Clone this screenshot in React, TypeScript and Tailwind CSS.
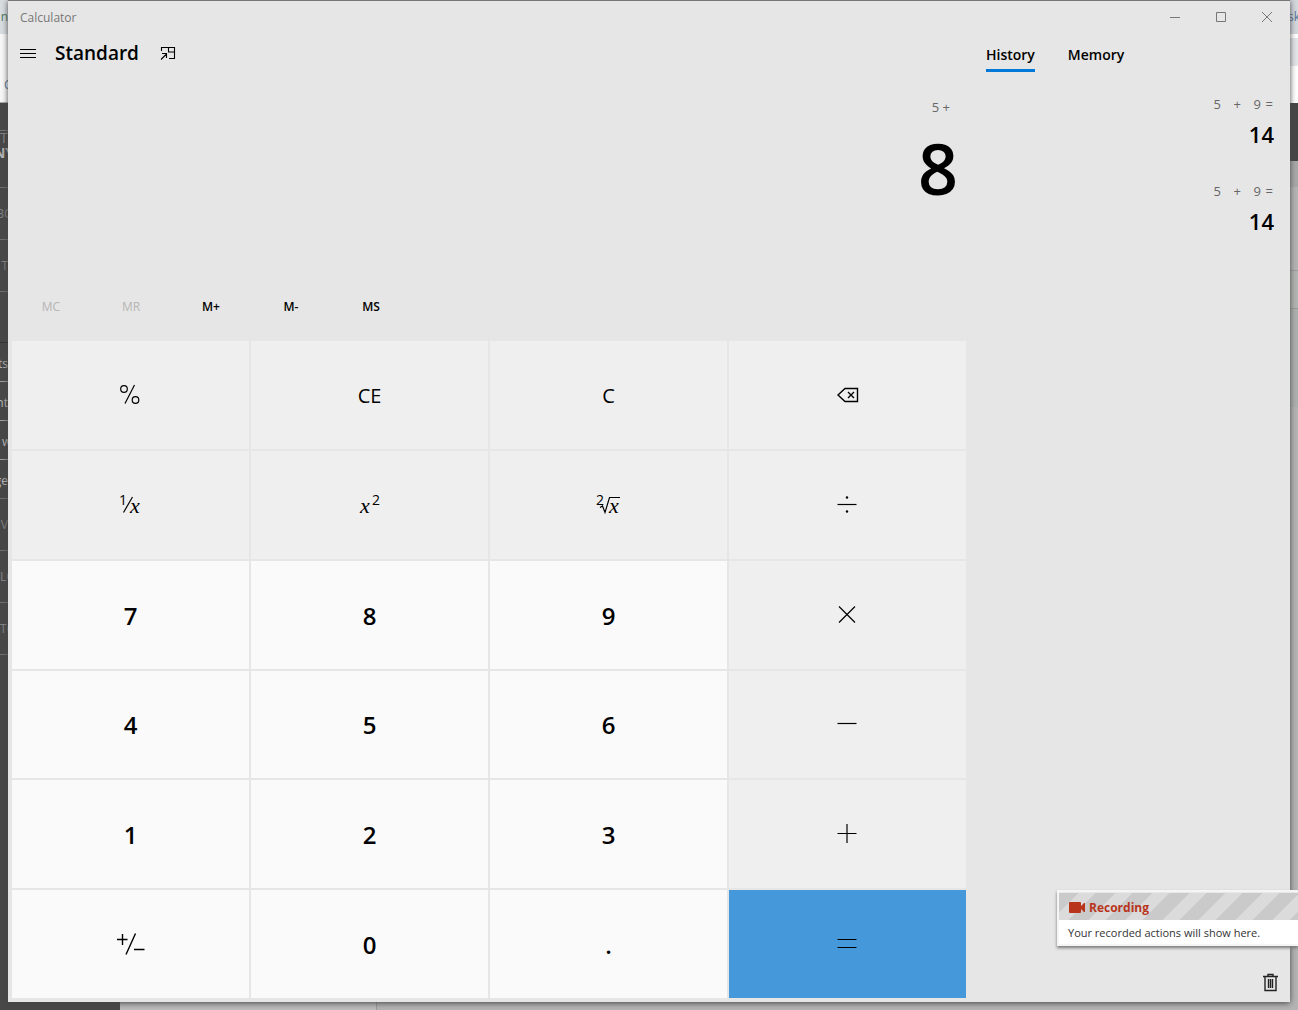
import React from "react";

type IconProps = { children: React.ReactNode };

function Icon({ children }: IconProps) {
  return (
    <svg className="size-8 shrink-0" viewBox="1 0 32 32" fill="none" stroke="black" strokeWidth="1.2" aria-hidden="true">
      {children}
    </svg>
  );
}

const Glyph = ({ x, y, children }: { x: number; y: number; children: string }) => (
  <text x={x} y={y} className="fill-black stroke-none font-['Open_Sans',sans-serif] text-[14px]">
    {children}
  </text>
);

const Variable = ({ x, y }: { x: number; y: number }) => (
  <text x={x} y={y} className="fill-black stroke-none font-['Liberation_Serif',serif] text-[22px] italic">
    x
  </text>
);

const icons: Record<string, React.ReactNode> = {
  percent: (
    <Icon>
      <circle cx="10" cy="10" r="3.3" />
      <circle cx="21.5" cy="21" r="3.3" />
      <path d="M20.5 6 11 24.5" />
    </Icon>
  ),
  reciprocal: (
    <Icon>
      <Glyph x={5} y={16}>1</Glyph>
      <path d="M18.5 8 9.5 23.5" />
      <Variable x={16} y={24} />
    </Icon>
  ),
  square: (
    <Icon>
      <Variable x={7} y={24} />
      <Glyph x={19} y={16}>2</Glyph>
    </Icon>
  ),
  root: (
    <Icon>
      <Glyph x={4} y={16}>2</Glyph>
      <path d="M8 18.5 10.5 17 13 23.5 17.5 8.5H28" />
      <Variable x={17} y={24} />
    </Icon>
  ),
  backspace: (
    <Icon>
      <path d="M7 16 14 9.5H26.5V22.5H14Z M17 13 23 19 M23 13 17 19" strokeWidth="1.4" />
    </Icon>
  ),
  divide: (
    <Icon>
      <path d="M6.5 15.5H25.5" />
      <circle cx="16" cy="8.5" r="1.2" className="fill-black stroke-none" />
      <circle cx="16" cy="22.5" r="1.2" className="fill-black stroke-none" />
    </Icon>
  ),
  multiply: (
    <Icon>
      <path d="M8 7.5 24 23.5 M24 7.5 8 23.5" />
    </Icon>
  ),
  minus: (
    <Icon>
      <path d="M6.5 15.5H25.5" />
    </Icon>
  ),
  plus: (
    <Icon>
      <path d="M6.5 15.5H25.5 M16 6V25" />
    </Icon>
  ),
  equals: (
    <Icon>
      <path d="M6.5 11.5H25.5 M6.5 19.5H25.5" />
    </Icon>
  ),
  negate: (
    <Icon>
      <path d="M3 11.5H13.5 M8.5 6V17 M21.5 5.5 12 26.5 M20 21.5H30.5" strokeWidth="1.4" />
    </Icon>
  ),
};

type Key = { label: string; icon?: string; kind: "op" | "fn" | "num" | "eq" };

const keys: Key[] = [
  { label: "Percent", icon: "percent", kind: "fn" },
  { label: "CE", kind: "fn" },
  { label: "C", kind: "fn" },
  { label: "Backspace", icon: "backspace", kind: "fn" },
  { label: "Reciprocal", icon: "reciprocal", kind: "fn" },
  { label: "Square", icon: "square", kind: "fn" },
  { label: "Square root", icon: "root", kind: "fn" },
  { label: "Divide by", icon: "divide", kind: "op" },
  { label: "7", kind: "num" },
  { label: "8", kind: "num" },
  { label: "9", kind: "num" },
  { label: "Multiply by", icon: "multiply", kind: "op" },
  { label: "4", kind: "num" },
  { label: "5", kind: "num" },
  { label: "6", kind: "num" },
  { label: "Minus", icon: "minus", kind: "op" },
  { label: "1", kind: "num" },
  { label: "2", kind: "num" },
  { label: "3", kind: "num" },
  { label: "Plus", icon: "plus", kind: "op" },
  { label: "Positive negative", icon: "negate", kind: "num" },
  { label: "0", kind: "num" },
  { label: ".", kind: "num" },
  { label: "Equals", icon: "equals", kind: "eq" },
];

const keyStyles = {
  fn: "bg-[#efefef] text-xl",
  op: "bg-[#efefef] text-xl",
  num: "bg-[#fafafa] text-2xl font-semibold",
  eq: "bg-[#4599db] text-xl",
};

const memoryKeys = [
  { label: "MC", disabled: true },
  { label: "MR", disabled: true },
  { label: "M+", disabled: false },
  { label: "M-", disabled: false },
  { label: "MS", disabled: false },
];

const leftSlices = [
  { text: "n", style: "h-[34px] bg-[#d8dde1] justify-end text-xs text-[#4b7b5c]" },
  { text: "", style: "h-[34px] bg-[#f8f8f8]" },
  { text: "C", style: "h-[35px] bg-[#f8f8f8] border-b border-[#aaa] text-xs text-[#54759b] pl-1" },
  { text: "", style: "h-[27px]" },
  { text: "TO", style: "h-[15px] border-t border-[#777] text-sm text-[#858585]" },
  { text: "NY", style: "h-[15px] justify-center text-sm font-bold text-[#b5b5b5]" },
  { text: "", style: "h-[27px]" },
  { text: "BC", style: "h-[52px] border-t border-[#707070] justify-center text-xs text-[#858585]" },
  { text: "T", style: "h-[52px] border-t border-[#707070] justify-end text-xs text-[#858585]" },
  { text: "", style: "h-[51px] border-t border-[#707070]" },
  { text: "ts", style: "h-[39px] border-t border-[#333] pt-1 justify-end text-xs text-[#bbb]" },
  { text: "nt", style: "h-[39px] border-t border-[#a0a0a0] pt-1 justify-end text-xs text-[#bbb]" },
  { text: "w", style: "h-[39px] border-t border-[#a0a0a0] pt-1 pl-[2px] text-xs text-[#bbb]" },
  { text: "ge", style: "h-[39px] border-t border-[#a0a0a0] pt-1 justify-end text-xs text-[#bbb]" },
  { text: "V", style: "h-[52px] border-t border-[#707070] justify-end text-xs text-[#858585]" },
  { text: "LO", style: "h-[52px] border-t border-[#707070] text-xs text-[#858585]" },
  { text: "TO", style: "h-[52px] border-t border-[#707070] text-xs text-[#858585]" },
  { text: "", style: "h-px bg-[#707070]" },
];

const rightSlices = [
  { text: "sk", style: "h-[34px] bg-[#d3d8dd] justify-center text-xs text-[#54759b]" },
  { text: "", style: "h-[4px] bg-white" },
  { text: "", style: "h-[28px] bg-[#e3e5e8]" },
  { text: "", style: "h-[37px] bg-white" },
  { text: "", style: "h-[58px] bg-[#464646]" },
  { text: "", style: "h-[26px] bg-[#a8a8a8]" },
  { text: "", style: "h-[83px] bg-[#b4b4b4]" },
  { text: "", style: "h-[39px] border-y border-[#9c9c9c] bg-[#b2b4b1]" },
  { text: "", style: "h-[98px] bg-[#adb0af]" },
];

function Slices({ items }: { items: { text: string; style: string }[] }) {
  return (
    <>
      {items.map((s, i) => (
        <div key={i} className={`flex shrink-0 items-center overflow-hidden leading-none whitespace-nowrap ${s.style}`}>
          {s.text}
        </div>
      ))}
    </>
  );
}

function TitleBar() {
  return (
    <header className="flex h-8 shrink-0 items-center justify-between pl-3 text-xs text-[#777]">
      <span className="pt-0.5">Calculator</span>
      <div className="flex h-full">
        <button aria-label="Minimize" className="flex w-[46px] items-center justify-center">
          <svg className="size-3" viewBox="0 0 12 12" stroke="#777"><path d="M1 6.5H11" /></svg>
        </button>
        <button aria-label="Maximize" className="flex w-[46px] items-center justify-center">
          <svg className="size-3" viewBox="0 0 12 12" fill="none" stroke="#777"><path d="M1.5 1.5h9v9h-9z" /></svg>
        </button>
        <button aria-label="Close" className="flex w-[46px] items-center justify-center">
          <svg className="size-3" viewBox="0 0 12 12" stroke="#777"><path d="M1 1 11 11 M11 1 1 11" /></svg>
        </button>
      </div>
    </header>
  );
}

function HistoryItem() {
  return (
    <li className="flex h-[87px] flex-col items-end">
      <div className="flex pr-px text-[13px] leading-5 text-[#666]">
        <span className="w-5">5</span>
        <span className="w-5">+</span>
        <span className="w-3">9</span>
        <span>=</span>
      </div>
      <div className="text-[22px] leading-10 font-semibold">14</div>
    </li>
  );
}

function RecordingNotice() {
  return (
    <aside className="absolute right-0 bottom-16 z-20 w-[241px] border-y-2 border-l-2 border-[#f5f5f5] bg-white shadow-[0_2px_3px_#777]">
      <div className="flex h-7 items-center gap-1 border-t border-[#e8e8e8] bg-[repeating-linear-gradient(135deg,#cacaca_0px,#cacaca_14px,#dbdbdb_14px,#dbdbdb_26px)] pt-0.5 pl-2.5 text-xs font-bold text-[#b8351c]">
        <svg className="h-3 w-4" viewBox="0 0 16 12" fill="#b8351c" aria-hidden="true">
          <path d="M1 0H11Q12 0 12 1V4L15 1H16V10H15L12 7V10Q12 11 11 11H1Q0 11 0 10V1Q0 0 1 0Z" />
        </svg>
        Recording
      </div>
      <p className="h-6 pl-[9px] text-[11px] leading-[26px] whitespace-nowrap text-[#333]">
        Your recorded actions will show here.
      </p>
    </aside>
  );
}

export default function App() {
  return (
    <div className="relative grid h-screen grid-cols-[8px_minmax(0,1fr)_8px] grid-rows-[minmax(0,1fr)_8px] overflow-hidden bg-[#b4b4b4] font-['Open_Sans','Noto_Sans',sans-serif] text-black">
      <div className="flex flex-col overflow-hidden bg-[#484848]">
        <Slices items={leftSlices} />
      </div>

      <main className="z-10 flex flex-col border-t border-[#777] bg-[#e6e6e6] shadow-[0_1px_6px_#444]">
        <TitleBar />
        <div className="flex min-h-0 flex-1">
          <section className="flex min-w-0 flex-1 flex-col px-1 pb-1">
            <div className="flex h-10 items-center pl-2">
              <button aria-label="Open navigation" className="flex size-4 items-center">
                <svg className="size-4" viewBox="0 0 16 16" stroke="black"><path d="M0 4.5H16 M0 8.5H16 M0 12.5H16" /></svg>
              </button>
              <h1 className="ml-[19px] text-[19px] leading-7 font-semibold">Standard</h1>
              <button aria-label="Keep on top" className="ml-[21px]">
                <svg className="size-4" viewBox="0 0 16 16" fill="none" stroke="black" strokeWidth="1.1">
                  <path d="M1.5 6V2.5H14.5V13.5H9 M8.5 2.5V7H14.5 M1 14.5 6.5 9 M2 8.5H6.5V13" />
                </svg>
              </button>
            </div>
            <output className="flex h-[217px] flex-col items-end pt-6">
              <span className="pr-4 text-[13px] leading-5 text-[#666]">5 +</span>
              <span className="pr-2 text-[70px] leading-[102px] font-semibold">8</span>
            </output>
            <div className="flex h-[51px]">
              {memoryKeys.map((k) => (
                <button
                  key={k.label}
                  disabled={k.disabled}
                  className="h-[33px] w-20 pr-0.5 text-xs font-semibold disabled:font-normal disabled:text-[#b5b5b5]"
                >
                  {k.label}
                </button>
              ))}
            </div>
            <div className="grid min-h-0 flex-1 grid-cols-4 grid-rows-6 gap-[2px]">
              {keys.map((k) => (
                <button key={k.label} aria-label={k.label} className={`flex items-center justify-center ${keyStyles[k.kind]}`}>
                  {k.icon ? icons[k.icon] : <span className="pt-0.5">{k.label}</span>}
                </button>
              ))}
            </div>
          </section>

          <section className="flex w-80 shrink-0 flex-col px-4">
            <div role="tablist" className="flex h-[39px] gap-[33px] text-[14px] font-semibold">
              <button role="tab" aria-selected="true" className="border-b-3 border-[#0078d7] pt-1.5">History</button>
              <button role="tab" aria-selected="false" className="border-b-3 border-transparent pt-1.5">Memory</button>
            </div>
            <ul className="flex-1 pt-[22px]">
              <HistoryItem />
              <HistoryItem />
            </ul>
            <button aria-label="Clear all history" className="mb-2.5 -mr-1.5 self-end">
              <svg className="size-5" viewBox="0 0 20 20" fill="none" stroke="#222" strokeWidth="1.4" aria-hidden="true">
                <path d="M3 4.5H18 M8 4.5V2.5H13V4.5 M5 4.5V18.5H16V4.5 M8.5 7V16 M10.5 7V16 M12.5 7V16" />
              </svg>
            </button>
          </section>
        </div>
      </main>

      <div className="flex flex-col overflow-hidden">
        <Slices items={rightSlices} />
      </div>

      <div className="col-span-3 flex">
        <div className="w-[120px] bg-[#484848]" />
        <div className="w-[257px] border-r border-[#999] bg-[#bbb]" />
        <div className="flex-1 bg-[#b4b4b4]" />
      </div>

      <RecordingNotice />
    </div>
  );
}
